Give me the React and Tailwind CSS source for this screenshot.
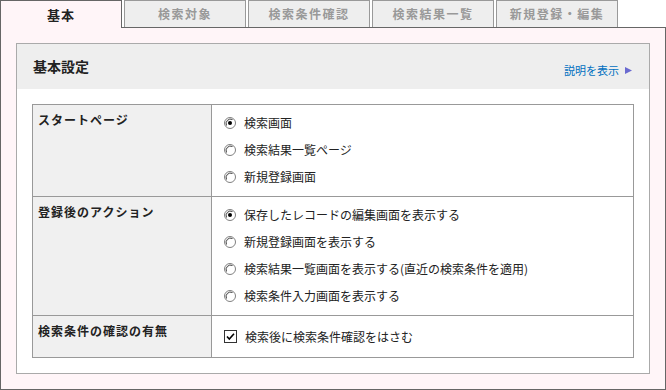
import React from "react"

const tabs = ["基本", "検索対象", "検索条件確認", "検索結果一覧", "新規登録・編集"]

const font = { fontFamily: '"Noto Sans CJK JP", "Liberation Sans", sans-serif' }

function Radio({ checked }) {
  return (
    <svg width="12" height="12" viewBox="0 0 12 12" className="shrink-0">
      <circle cx="6" cy="6" r="5.5" fill="#fff" stroke="#808080" />
      <path d="M2.5 8.5 A4.5 4.5 0 0 1 8.5 2.5" fill="none" stroke="#404040" />
      {checked && <circle cx="6" cy="6" r="2" fill="#000" />}
    </svg>
  )
}

function Checkbox() {
  return (
    <svg width="13" height="13" viewBox="0 0 13 13" className="shrink-0">
      <rect x="0.5" y="0.5" width="12" height="12" fill="#fff" stroke="#333" />
      <path d="M3 6.5 L5.3 9 L10 3.8" fill="none" stroke="#000" strokeWidth="1.6" />
    </svg>
  )
}

function Option({ children, checked, box }) {
  return (
    <div className="flex items-center h-[27px] gap-[8px]">
      {box ? <Checkbox /> : <Radio checked={checked} />}
      <span className="text-[12px] text-[#222]">{children}</span>
    </div>
  )
}

function Row({ label, first, pad = "pt-[4px] pb-[6px]", children }) {
  return (
    <div className={`flex ${first ? "" : "border-t border-[#999]"}`}>
      <div className="w-[179px] shrink-0 bg-[#f0f0f0] border-r border-[#999] pl-[5px] pt-[7px] text-[12px] font-bold tracking-[1px] text-[#222] leading-[16px]">
        {label}
      </div>
      <div className={`flex-1 pl-[12px] ${pad}`}>{children}</div>
    </div>
  )
}

export default function App() {
  return (
    <div className="w-[666px] h-[390px] bg-white" style={font}>
      <div className="flex gap-[2px] h-[27px]">
        {tabs.map((t, i) =>
          i === 0 ? (
            <div key={t} className="relative z-10 w-[122px] h-[28px] border border-b-0 border-[#666] bg-[#fff5f8] flex items-center justify-center text-[13px] font-bold tracking-[1px] text-[#222]">
              {t}
            </div>
          ) : (
            <div key={t} className="w-[122px] h-[27px] border border-b-0 border-[#999] bg-[#eee] flex items-center justify-center text-[12px] font-bold tracking-[1.5px] text-[#999]">
              {t}
            </div>
          )
        )}
      </div>
      <div className="h-[363px] border border-[#666] bg-[#fff5f8] px-[15px] py-[15px]">
        <div className="border border-[#aaa] bg-white h-full">
          <div className="h-[45px] bg-[#eee] flex items-center justify-between pl-[16px] pr-[17px]">
            <span className="text-[14px] font-bold text-[#222]">基本設定</span>
            <span className="flex items-center gap-[6px] mt-[7px] text-[11px] text-[#0070c0]">
              説明を表示
              <svg width="7" height="7" viewBox="0 0 7 7">
                <path d="M0 0 L7 3.5 L0 7 Z" fill="#6a6ad0" />
              </svg>
            </span>
          </div>
          <div className="px-[15px] pt-[15px]">
            <div className="border border-[#999]">
              <Row label="スタートページ" first>
                <Option checked>検索画面</Option>
                <Option>検索結果一覧ページ</Option>
                <Option>新規登録画面</Option>
              </Row>
              <Row label="登録後のアクション">
                <Option checked>保存したレコードの編集画面を表示する</Option>
                <Option>新規登録画面を表示する</Option>
                <Option>検索結果一覧画面を表示する(直近の検索条件を適用)</Option>
                <Option>検索条件入力画面を表示する</Option>
              </Row>
              <Row label="検索条件の確認の有無" pad="pt-[7px] pb-[7px]">
                <Option box>検索後に検索条件確認をはさむ</Option>
              </Row>
            </div>
          </div>
        </div>
      </div>
    </div>
  )
}
